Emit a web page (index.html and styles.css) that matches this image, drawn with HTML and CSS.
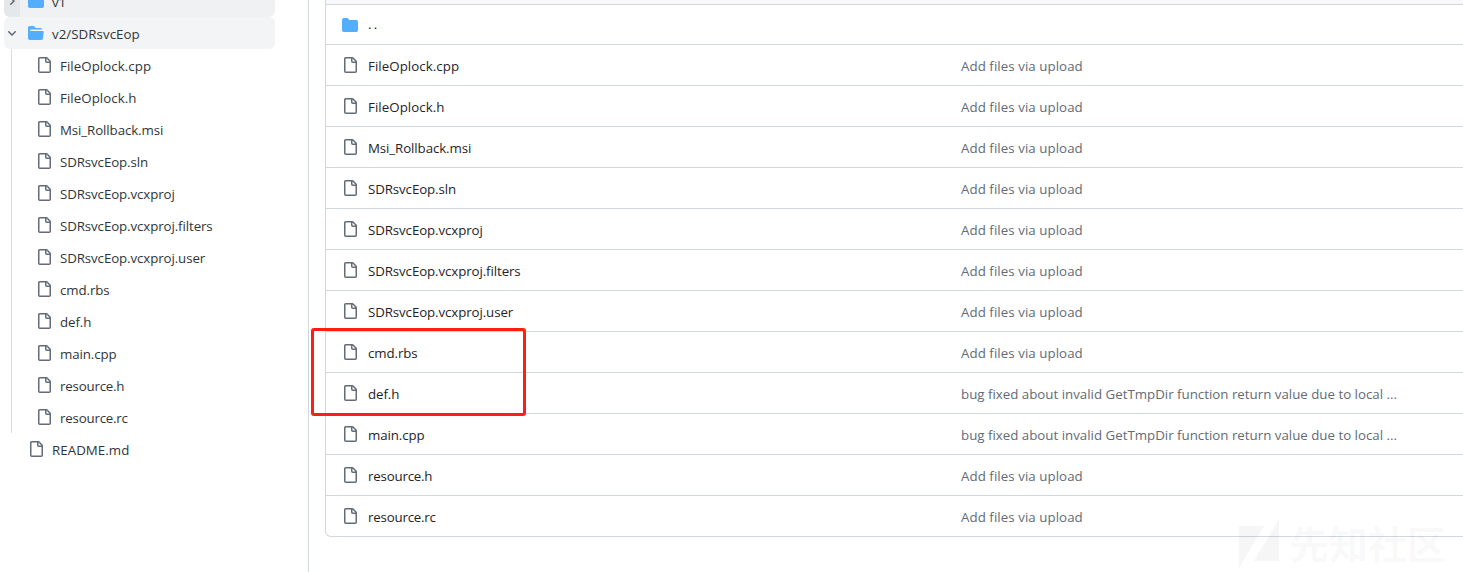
FILE: index.html
```
<!DOCTYPE html>
<html lang="en">
<head>
<meta charset="utf-8">
<title>SDRsvcEop files</title>
<link rel="stylesheet" href="styles.css">
</head>
<body>
<svg class="defs" width="0" height="0">
  <symbol id="file" viewBox="0 0 16 16"><path d="M2 1.75C2 .784 2.784 0 3.75 0h6.586c.464 0 .909.184 1.237.513l2.914 2.914c.329.328.513.773.513 1.237v9.586A1.75 1.75 0 0 1 13.25 16h-9.5A1.75 1.75 0 0 1 2 14.25Zm1.75-.25a.25.25 0 0 0-.25.25v12.5c0 .138.112.25.25.25h9.5a.25.25 0 0 0 .25-.25V6h-2.75A1.75 1.75 0 0 1 9 4.25V1.5Zm6.75.062V4.25c0 .138.112.25.25.25h2.688l-.011-.013-2.914-2.914-.013-.011Z"/></symbol>
  <symbol id="folder" viewBox="0 0 16 16"><path d="M1.75 1A1.75 1.75 0 0 0 0 2.75v10.5C0 14.216.784 15 1.75 15h12.5A1.75 1.75 0 0 0 16 13.25v-8.5A1.75 1.75 0 0 0 14.25 3H7.5a.25.25 0 0 1-.2-.1l-.9-1.2C6.07 1.26 5.55 1 5 1H1.75Z"/></symbol>
  <symbol id="folder-open" viewBox="0 0 16 16"><path d="M.513 1.513A1.75 1.75 0 0 1 1.75 1h3.5c.55 0 1.07.26 1.4.7l.9 1.2a.25.25 0 0 0 .2.1H13a1 1 0 0 1 1 1v.5H2.75a.75.75 0 0 0 0 1.5h11.978a1 1 0 0 1 .994 1.117L15 13.25A1.75 1.75 0 0 1 13.25 15H1.75A1.75 1.75 0 0 1 0 13.25V2.75c0-.464.184-.91.513-1.237Z"/></symbol>
  <symbol id="right" viewBox="0 0 12 12"><path d="M4.7 10c-.2 0-.4-.1-.5-.2-.3-.3-.3-.8 0-1.1L6.9 6 4.2 3.3c-.3-.3-.3-.8 0-1.1.3-.3.8-.3 1.1 0l3.3 3.2c.3.3.3.8 0 1.1L5.3 9.7c-.2.2-.4.3-.6.3Z"/></symbol>
  <symbol id="down" viewBox="0 0 12 12"><path d="M6 8.825c-.2 0-.4-.1-.5-.2l-3.3-3.3c-.3-.3-.3-.8 0-1.1.3-.3.8-.3 1.1 0l2.7 2.7 2.7-2.7c.3-.3.8-.3 1.1 0 .3.3.3.8 0 1.1l-3.2 3.2c-.2.2-.4.3-.6.3Z"/></symbol>
</svg>
<div class="page">
  <nav class="sidebar">
    <div class="node hovered"><span class="toggle"><svg class="chevron"><use href="#right"/></svg></span><svg class="icon blue"><use href="#folder"/></svg><span class="label">v1</span></div>
    <div class="node current"><span class="toggle"><svg class="chevron"><use href="#down"/></svg></span><svg class="icon blue"><use href="#folder-open"/></svg><span class="label wide">v2/SDRsvcEop</span></div>
    <div class="children">
      <div class="leaf"><svg class="icon"><use href="#file"/></svg><span class="label wide">FileOplock.cpp</span></div>
      <div class="leaf"><svg class="icon"><use href="#file"/></svg><span class="label wide">FileOplock.h</span></div>
      <div class="leaf"><svg class="icon"><use href="#file"/></svg><span class="label">Msi_Rollback.msi</span></div>
      <div class="leaf"><svg class="icon"><use href="#file"/></svg><span class="label">SDRsvcEop.sln</span></div>
      <div class="leaf"><svg class="icon"><use href="#file"/></svg><span class="label">SDRsvcEop.vcxproj</span></div>
      <div class="leaf"><svg class="icon"><use href="#file"/></svg><span class="label">SDRsvcEop.vcxproj.filters</span></div>
      <div class="leaf"><svg class="icon"><use href="#file"/></svg><span class="label">SDRsvcEop.vcxproj.user</span></div>
      <div class="leaf"><svg class="icon"><use href="#file"/></svg><span class="label">cmd.rbs</span></div>
      <div class="leaf"><svg class="icon"><use href="#file"/></svg><span class="label">def.h</span></div>
      <div class="leaf"><svg class="icon"><use href="#file"/></svg><span class="label">main.cpp</span></div>
      <div class="leaf"><svg class="icon"><use href="#file"/></svg><span class="label tight">resource.h</span></div>
      <div class="leaf"><svg class="icon"><use href="#file"/></svg><span class="label tight">resource.rc</span></div>
    </div>
    <div class="leaf root"><svg class="icon"><use href="#file"/></svg><span class="label wide">README.md</span></div>
  </nav>
  <main class="content">
    <div class="table">
      <div class="head"></div>
      <div class="row parent"><svg class="icon blue"><use href="#folder"/></svg><span class="name dots">..</span></div>
      <div class="row"><svg class="icon"><use href="#file"/></svg><span class="name wide">FileOplock.cpp</span><span class="msg">Add files via upload</span></div>
      <div class="row"><svg class="icon"><use href="#file"/></svg><span class="name wide">FileOplock.h</span><span class="msg">Add files via upload</span></div>
      <div class="row"><svg class="icon"><use href="#file"/></svg><span class="name">Msi_Rollback.msi</span><span class="msg">Add files via upload</span></div>
      <div class="row"><svg class="icon"><use href="#file"/></svg><span class="name">SDRsvcEop.sln</span><span class="msg">Add files via upload</span></div>
      <div class="row"><svg class="icon"><use href="#file"/></svg><span class="name">SDRsvcEop.vcxproj</span><span class="msg">Add files via upload</span></div>
      <div class="row"><svg class="icon"><use href="#file"/></svg><span class="name">SDRsvcEop.vcxproj.filters</span><span class="msg">Add files via upload</span></div>
      <div class="row"><svg class="icon"><use href="#file"/></svg><span class="name">SDRsvcEop.vcxproj.user</span><span class="msg">Add files via upload</span></div>
      <div class="row"><svg class="icon"><use href="#file"/></svg><span class="name">cmd.rbs</span><span class="msg">Add files via upload</span></div>
      <div class="row"><svg class="icon"><use href="#file"/></svg><span class="name">def.h</span><span class="msg long">bug fixed about invalid GetTmpDir function return value due to local ...</span></div>
      <div class="row"><svg class="icon"><use href="#file"/></svg><span class="name">main.cpp</span><span class="msg long">bug fixed about invalid GetTmpDir function return value due to local ...</span></div>
      <div class="row"><svg class="icon"><use href="#file"/></svg><span class="name tight">resource.h</span><span class="msg">Add files via upload</span></div>
      <div class="row"><svg class="icon"><use href="#file"/></svg><span class="name tight">resource.rc</span><span class="msg">Add files via upload</span></div>
    </div>
  </main>
  <div class="highlight"></div>
  <div class="watermark"><svg class="mark" viewBox="0 0 40 49"><path d="M0 7h25L0 49ZM40 0v42H15Z"/></svg><span>先知社区</span></div>
</div>
</body>
</html>
```
FILE: styles.css
```
* { box-sizing: border-box; }
body {
  margin: 0;
  background: #fff;
  color: #1f2328;
  font: 14px/20px "Open Sans", "Noto Sans", sans-serif;
  overflow: hidden;
}
.defs { position: absolute; }
.page { position: relative; display: flex; width: 1463px; height: 572px; overflow: hidden; }
.icon { flex: none; width: 16px; height: 16px; fill: #636c76; }
.blue { fill: #54aeff; }
.label, .name, .msg { white-space: nowrap; font-size: 13.3px; letter-spacing: -0.1px; }
.wide { letter-spacing: 0.05px; }
.tight { letter-spacing: -0.2px; }

.sidebar { flex: none; width: 309px; height: 572px; border-right: 1px solid #d0d7de; padding-left: 4px; color: #30353a; }
.node { display: flex; align-items: center; width: 271px; height: 32px; border-radius: 6px; }
.node .label, .leaf .label { margin-left: 8px; padding-top: 2px; }
.node .icon { margin-left: 8px; }
.hovered { margin-top: -15px; background: #eff1f3; }
.current { background: #f3f4f6; }
.toggle { display: flex; align-items: center; justify-content: center; width: 16px; height: 32px; border-radius: 6px 0 0 6px; }
.hovered .toggle { background: #e4e8eb; }
.chevron { width: 12px; height: 12px; fill: #636c76; }
.children { margin-left: 7px; border-left: 1px solid #d9dcdf; padding-left: 24px; }
.leaf { display: flex; align-items: center; height: 32px; }
.root { padding-left: 24px; }

.content { flex: 1; min-width: 0; padding-left: 16px; }
.table { width: 1160px; border: 1px solid #d0d7de; border-top: 0; border-radius: 0 0 6px 6px; }
.head { height: 4px; background: #f6f8fa; }
.row { display: grid; grid-template-columns: 16px 593px 1fr; column-gap: 10px; align-items: center; height: 41px; padding-left: 16px; border-top: 1px solid #d0d7de; }
.row .icon { margin-top: -1px; }
.row .name { padding-top: 2px; }
.row .msg { padding-top: 2px; margin-left: -10px; color: #636c76; letter-spacing: 0.06px; }
.row .long { letter-spacing: 0; }
.parent { height: 40px; }
.parent .icon { margin-top: 1px; }
.row .dots { padding: 0 0 1px; letter-spacing: 2.2px; }

.highlight { position: absolute; left: 311px; top: 328px; width: 215px; height: 88px; border: 3px solid #ff1e12; border-radius: 3px; }
.watermark { position: absolute; left: 1239px; top: 519px; display: flex; color: rgba(80, 80, 80, .05); font: bold 39px/46px "Noto Sans CJK SC", sans-serif; }
.mark { width: 40px; height: 49px; margin-right: 11px; fill: currentColor; }
```
